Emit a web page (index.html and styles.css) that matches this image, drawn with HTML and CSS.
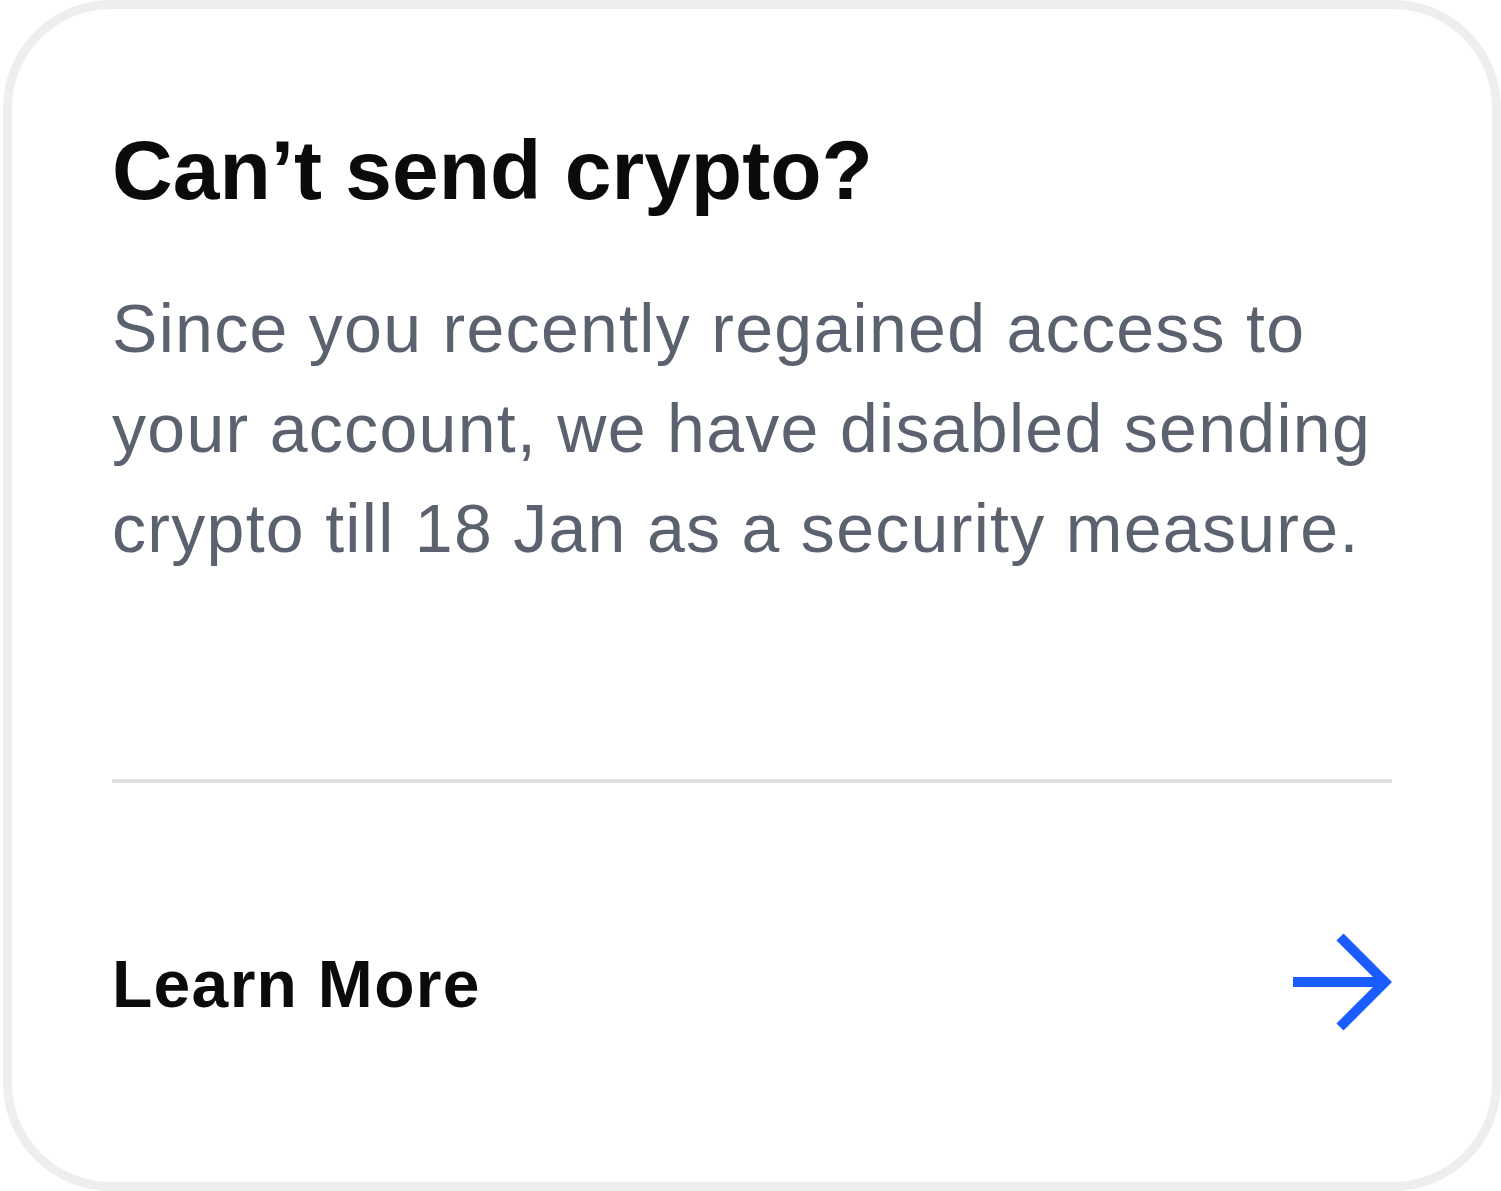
FILE: index.html
```html
<!DOCTYPE html>
<html lang="en">
<head>
<meta charset="utf-8">
<title>Can't send crypto?</title>
<link rel="stylesheet" href="styles.css">
</head>
<body>
<div class="card">
  <h1 class="title">Can’t send crypto?</h1>
  <p class="body">Since you recently regained access to your account, we have disabled sending crypto till 18 Jan as a security measure.</p>
  <div class="divider"></div>
  <a class="row" href="#">
    <span class="label">Learn More</span>
    <svg class="arrow" viewBox="0 0 100 100" width="100" height="100" aria-hidden="true">
      <path d="M1 50 H90" fill="none" stroke="#1a5cff" stroke-width="10"/>
      <path d="M48 5 L93 50 L48 95" fill="none" stroke="#1a5cff" stroke-width="10" stroke-linejoin="miter"/>
    </svg>
  </a>
</div>
</body>
</html>
```

FILE: styles.css
```css
html, body {
  margin: 0;
  padding: 0;
  background: #ffffff;
}

.card {
  box-sizing: border-box;
  width: 1498px;
  height: 1191px;
  margin-left: 3px;
  border: 9px solid #eeeeee;
  border-radius: 108px;
  padding: 111px 100px 0 100px;
  background: #ffffff;
  display: flex;
  flex-direction: column;
  font-family: "Liberation Sans", Arial, sans-serif;
}

.title {
  margin: 0;
  font-size: 84px;
  line-height: 100px;
  font-weight: 700;
  color: #0a0b0d;
}

.body {
  margin: 58px 0 0 0;
  font-size: 68px;
  line-height: 100px;
  font-weight: 400;
  letter-spacing: 1.3px;
  color: #5b616e;
}

.divider {
  margin-top: 201px;
  height: 4px;
  background: #dfe0e3;
}

.row {
  margin-top: 151px;
  height: 100px;
  display: flex;
  align-items: center;
  justify-content: space-between;
  text-decoration: none;
}

.label {
  font-size: 66px;
  line-height: 100px;
  font-weight: 700;
  letter-spacing: 1.3px;
  color: #0a0b0d;
}

.arrow {
  display: block;
  width: 100px;
  height: 100px;
  margin-top: -4px;
}
```
